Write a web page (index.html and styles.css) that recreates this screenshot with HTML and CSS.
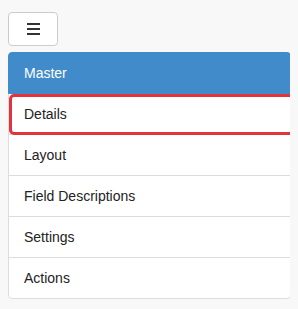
FILE: index.html
```html
<!DOCTYPE html>
<html lang="en">
<head>
  <meta charset="UTF-8">
  <title>Menu</title>
  <link rel="stylesheet" href="styles.css">
</head>
<body>
  <button class="menu-toggle" type="button">
    <svg width="13" height="12" viewBox="0 0 13 12">
      <rect x="0" y="0" width="13" height="2" fill="#333"/>
      <rect x="0" y="5" width="13" height="2" fill="#333"/>
      <rect x="0" y="10" width="13" height="2" fill="#333"/>
    </svg>
  </button>

  <div class="list-group">
    <a class="list-group-item active">Master</a>
    <a class="list-group-item highlight">Details</a>
    <a class="list-group-item">Layout</a>
    <a class="list-group-item">Field Descriptions</a>
    <a class="list-group-item">Settings</a>
    <a class="list-group-item">Actions</a>
  </div>
</body>
</html>
```

FILE: styles.css
```css
body { margin: 8px; padding-top: 4px; background: #f8f8f8; font-family: "Liberation Sans", Arial, sans-serif; font-size: 14px; color: #333; }
.menu-toggle { display: flex; align-items: center; justify-content: center; width: 50px; height: 34px; padding: 0; background: #fff; border: 1px solid #ccc; border-radius: 4px; }
.list-group { display: flex; flex-direction: column; width: 283px; margin-top: 6px; }
.list-group-item { position: relative; display: block; padding: 10px 15px; line-height: 20px; background: #fff; border: 1px solid #ddd; margin-bottom: -1px; color: #222; }
.list-group-item:first-child { border-top-left-radius: 4px; border-top-right-radius: 4px; }
.list-group-item:last-child { margin-bottom: 0; border-bottom-left-radius: 4px; border-bottom-right-radius: 4px; }
.list-group-item.active { background: #428bca; border-color: #428bca; color: #fff; z-index: 2; }
.highlight::after { content: ""; position: absolute; top: 0; left: 0; right: -4px; bottom: -1px; border: 3px solid #e2343f; border-radius: 5px; z-index: 3; }
```
